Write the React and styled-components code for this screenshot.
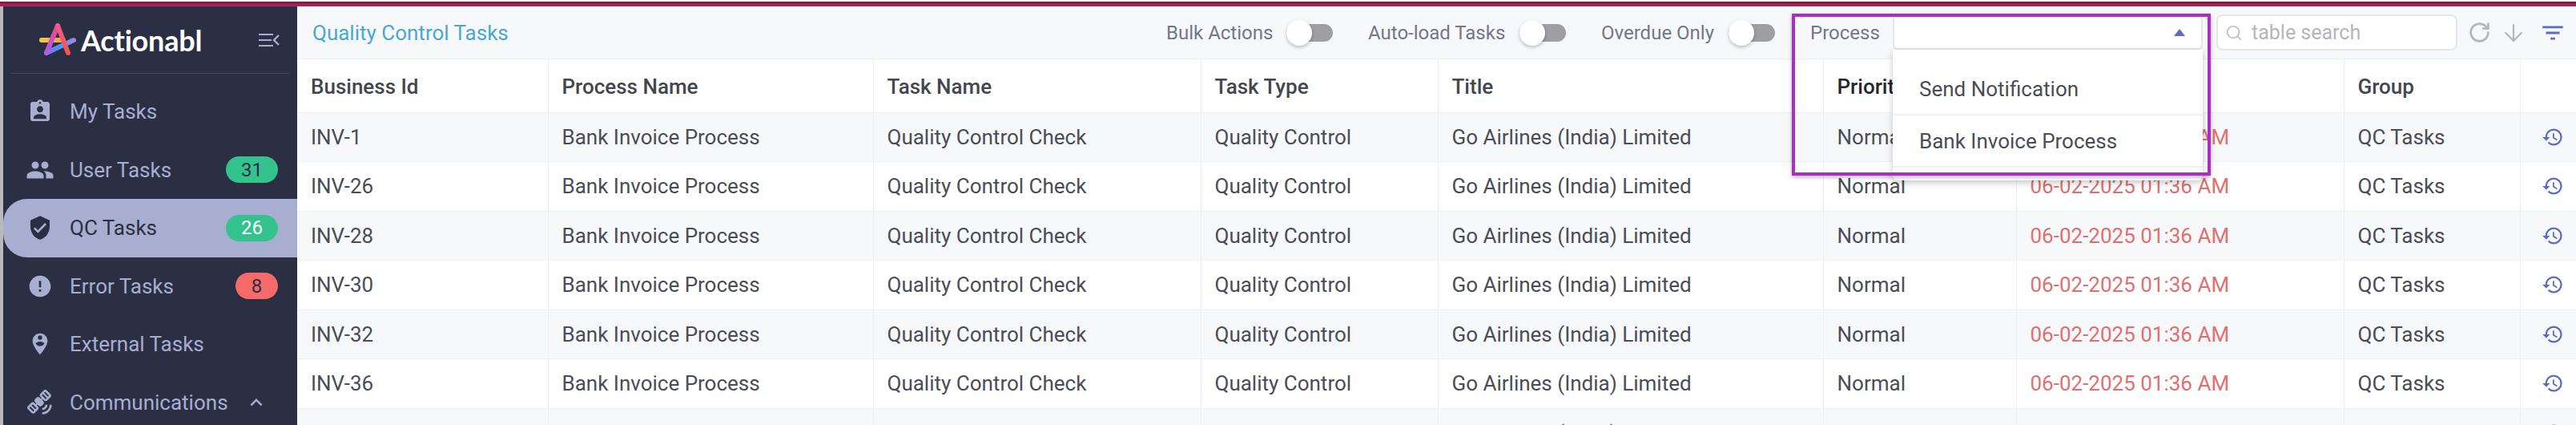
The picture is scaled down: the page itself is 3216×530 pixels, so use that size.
import React from 'react'
import styled, { createGlobalStyle } from 'styled-components'
import { MdAssignmentInd, MdPeople, MdVerifiedUser, MdError, MdPersonPinCircle, MdSatelliteAlt, MdHistory, MdKeyboardArrowUp, MdFilterList } from 'react-icons/md'
import { RotateCw, ArrowDown, Search } from 'lucide-react'

const GlobalStyle = createGlobalStyle`
    html, body {
        margin: 0;
        padding: 0;
        background: #fff;
        font-family: Roboto, "Liberation Sans", sans-serif;
    }
`

const columns = [
    { title: 'Business Id', width: 313 },
    { title: 'Process Name', width: 406 },
    { title: 'Task Name', width: 409 },
    { title: 'Task Type', width: 296 },
    { title: 'Title', width: 481 },
    { title: 'Priority', width: 241, dark: true },
    { title: '', width: 409 },
    { title: 'Group', width: 220 },
    { title: '', width: 70 },
]

const ids = ['INV-1', 'INV-26', 'INV-28', 'INV-30', 'INV-32', 'INV-36', 'INV-38']

const navItems = [
    { label: 'My Tasks', icon: MdAssignmentInd },
    { label: 'User Tasks', icon: MdPeople, badge: '31' },
    { label: 'QC Tasks', icon: MdVerifiedUser, badge: '26', active: true },
    { label: 'Error Tasks', icon: MdError, badge: '8', error: true },
    { label: 'External Tasks', icon: MdPersonPinCircle },
    { label: 'Communications', icon: MdSatelliteAlt, chevron: true },
]

function Logo() {
    return (
        <svg width="46" height="44" viewBox="0 0 46 44" fill="none" strokeLinecap="round" strokeWidth="6">
            <defs>
                <linearGradient id="logoYellow" gradientUnits="userSpaceOnUse" x1="3" y1="22" x2="30" y2="22">
                    <stop offset="0" stopColor="#f8c93e" />
                    <stop offset="1" stopColor="#f59a4c" />
                </linearGradient>
                <linearGradient id="logoLeft" gradientUnits="userSpaceOnUse" x1="23" y1="4" x2="9" y2="38">
                    <stop offset="0" stopColor="#f0487f" />
                    <stop offset="1" stopColor="#a860e8" />
                </linearGradient>
                <linearGradient id="logoRight" gradientUnits="userSpaceOnUse" x1="23" y1="4" x2="36" y2="38">
                    <stop offset="0" stopColor="#ee5b93" />
                    <stop offset="1" stopColor="#f0584c" />
                </linearGradient>
                <linearGradient id="logoBlue" gradientUnits="userSpaceOnUse" x1="9" y1="38" x2="43" y2="22">
                    <stop offset="0" stopColor="#8a6cf0" />
                    <stop offset="0.5" stopColor="#3f9bf2" />
                    <stop offset="1" stopColor="#a283e6" />
                </linearGradient>
            </defs>
            <path d="M3 22H30" stroke="url(#logoYellow)" />
            <path d="M9 38L43 22" stroke="url(#logoBlue)" />
            <path d="M23 4L9 38" stroke="url(#logoLeft)" />
            <path d="M23 4L36 38" stroke="url(#logoRight)" />
        </svg>
    )
}

function CollapseIcon() {
    return (
        <svg width="26" height="18" viewBox="0 0 26 18" fill="none" stroke="#a7aed0" strokeWidth="2">
            <path d="M0 2H18M0 9H16M0 16H18" />
            <path d="M25 3L19 9L25 15" strokeWidth="2.4" />
        </svg>
    )
}

export default function App() {
    return (
        <Page>
            <GlobalStyle />
            <TopStrip />
            <Body>
                <Edge />
                <Sidebar>
                    <Brand>
                        <Logo />
                        <BrandName>Actionabl</BrandName>
                        <Collapse><CollapseIcon /></Collapse>
                    </Brand>
                    <Nav>
                        {navItems.map((item) => (
                            <NavItem key={item.label} $active={item.active}>
                                <NavIcon><item.icon size={item.icon === MdPeople ? 36 : 32} /></NavIcon>
                                <NavLabel>{item.label}</NavLabel>
                                {item.badge && <Badge $error={item.error} $active={item.active}>{item.badge}</Badge>}
                                {item.chevron && <Chevron><MdKeyboardArrowUp size={30} /></Chevron>}
                            </NavItem>
                        ))}
                    </Nav>
                </Sidebar>
                <Main>
                    <Toolbar>
                        <Title>Quality Control Tasks</Title>
                        <ToggleGroup $width={132}>
                            <Label>Bulk Actions</Label>
                            <Toggle><Thumb /></Toggle>
                        </ToggleGroup>
                        <ToggleGroup $width={171}>
                            <Label>Auto-load Tasks</Label>
                            <Toggle><Thumb /></Toggle>
                        </ToggleGroup>
                        <ToggleGroup $width={141}>
                            <Label>Overdue Only</Label>
                            <Toggle><Thumb /></Toggle>
                        </ToggleGroup>
                        <ProcessLabel>Process</ProcessLabel>
                        <SelectBox>
                            <Caret />
                            <Dropdown>
                                <Option>Send Notification</Option>
                                <Option>Bank Invoice Process</Option>
                                <Option />
                            </Dropdown>
                        </SelectBox>
                        <SearchBox>
                            <Search size={22} color="#b9bcc4" strokeWidth={1.8} />
                            <SearchText>table search</SearchText>
                        </SearchBox>
                        <ToolIcons>
                            <RotateCw size={29} color="#b4b6bb" strokeWidth={2.2} />
                            <ArrowDown size={34} color="#b4b6bb" strokeWidth={1.6} />
                            <FilterIcon><MdFilterList size={34} /></FilterIcon>
                        </ToolIcons>
                    </Toolbar>
                    <Table>
                        <colgroup>
                            {columns.map((col, i) => <col key={i} style={{ width: col.width }} />)}
                        </colgroup>
                        <thead>
                            <tr>
                                {columns.map((col, i) => <Th key={i} $dark={col.dark}>{col.title}</Th>)}
                            </tr>
                        </thead>
                        <tbody>
                            {ids.map((id) => (
                                <Row key={id}>
                                    <Td>{id}</Td>
                                    <Td>Bank Invoice Process</Td>
                                    <Td>Quality Control Check</Td>
                                    <Td>Quality Control</Td>
                                    <Td>Go Airlines (India) Limited</Td>
                                    <Td>Normal</Td>
                                    <DateCell>06-02-2025 01:36 AM</DateCell>
                                    <Td>QC Tasks</Td>
                                    <IconCell><MdHistory size={28} /></IconCell>
                                </Row>
                            ))}
                        </tbody>
                    </Table>
                </Main>
            </Body>
            <Callout />
        </Page>
    )
}

const Page = styled.div`
    position: relative;
    width: 3216px;
    height: 530px;
    overflow: hidden;
    display: flex;
    flex-direction: column;
    background: #fff;
`

const TopStrip = styled.div`
    flex: none;
    height: 6px;
    margin-top: 2px;
    background: linear-gradient(#7c1040, #b22d62);
`

const Body = styled.div`
    flex: 1;
    display: flex;
    min-height: 0;
`

const Edge = styled.div`
    flex: none;
    width: 4px;
    background: #b9b9bb;
`

const Sidebar = styled.aside`
    flex: none;
    width: 367px;
    background: #2b2f44;
    display: flex;
    flex-direction: column;
`

const Brand = styled.div`
    flex: none;
    height: 83px;
    margin: 0 10px;
    padding: 0 12px 0 35px;
    border-bottom: 1px solid #45495f;
    display: flex;
    align-items: center;
`

const BrandName = styled.span`
    margin-left: 6px;
    font-family: Lato, sans-serif;
    font-weight: 700;
    font-size: 36px;
    color: #fff;
    letter-spacing: -0.2px;
`

const Collapse = styled.span`
    display: flex;
    margin-left: auto;
`

const Nav = styled.nav`
    padding-top: 11px;
    display: flex;
    flex-direction: column;
`

const NavItem = styled.div`
    flex: none;
    height: 72.5px;
    display: flex;
    align-items: center;
    padding: 0 24px 0 26px;
    color: ${(p) => (p.$active ? '#2b2f44' : '#a7aed0')};
    background: ${(p) => (p.$active ? '#a7aed0' : 'transparent')};
    border-radius: 30px 0 0 30px;
`

const NavIcon = styled.span`
    width: 40px;
    flex: none;
    display: flex;
    justify-content: center;
`

const NavLabel = styled.span`
    margin-left: 17px;
    font-size: 26px;
`

const Badge = styled.span`
    margin-left: auto;
    height: 33px;
    min-width: 53px;
    padding: 0 ${(p) => (p.$error ? 0 : 6)}px;
    box-sizing: ${(p) => (p.$error ? 'border-box' : 'content-box')};
    border-radius: 17px;
    display: flex;
    align-items: center;
    justify-content: center;
    font-size: 24px;
    color: ${(p) => (p.$active ? '#fff' : '#2b2f44')};
    background: ${(p) => (p.$error ? '#f66a6a' : '#34c28f')};
`

const Chevron = styled.span`
    display: flex;
    margin-left: auto;
    margin-right: 12px;
`

const Main = styled.main`
    flex: none;
    width: 2845px;
    display: flex;
    flex-direction: column;
`

const Toolbar = styled.div`
    flex: none;
    height: 66px;
    background: #f7f8fa;
    border-bottom: 1px solid #eceef1;
    box-sizing: border-box;
    display: flex;
    align-items: center;
    padding: 0 12px 0 19px;
`

const Title = styled.div`
    font-size: 26px;
    color: #4aa8cf;
    margin-right: auto;
`

const ToggleGroup = styled.div`
    display: flex;
    align-items: center;
    margin-right: 44px;
    & > span {
        width: ${(p) => p.$width}px;
        white-space: nowrap;
    }
`

const Label = styled.span`
    font-size: 24px;
    color: #74778a;
    margin-right: 18px;
`

const ProcessLabel = styled(Label)`
    width: 86px;
    margin-right: 17px;
`

const Toggle = styled.div`
    position: relative;
    width: 58px;
    height: 22px;
    border-radius: 11px;
    background: #9e9ea3;
`

const Thumb = styled.div`
    position: absolute;
    left: 0;
    top: -5px;
    width: 32px;
    height: 32px;
    border-radius: 50%;
    background: #fff;
    box-shadow: 0 2px 4px rgba(0, 0, 0, 0.25);
`

const SelectBox = styled.div`
    position: relative;
    width: 387px;
    height: 43px;
    box-sizing: border-box;
    background: #fff;
    border: 2px solid #e4e6ec;
    border-top-color: #f0f1f4;
    border-radius: 6px;
    margin-right: 17px;
`

const Caret = styled.div`
    position: absolute;
    right: 20px;
    top: 15px;
    width: 0;
    height: 0;
    border-left: 7px solid transparent;
    border-right: 7px solid transparent;
    border-bottom: 9px solid #5b6cc4;
`

const Dropdown = styled.div`
    position: absolute;
    left: -2px;
    top: 41px;
    width: 387px;
    height: 163px;
    overflow: hidden;
    background: #fff;
    border-radius: 0 0 6px 6px;
    box-shadow: 0 3px 8px rgba(0, 0, 0, 0.22);
    display: flex;
    flex-direction: column;
    padding-top: 17px;
    box-sizing: border-box;
    z-index: 5;
`

const Option = styled.div`
    flex: none;
    height: 65px;
    box-sizing: border-box;
    border-bottom: 2px solid #f0f1f4;
    display: flex;
    align-items: center;
    padding-left: 33px;
    font-size: 26px;
    color: #4a4d55;
`

const SearchBox = styled.div`
    width: 301px;
    height: 45px;
    box-sizing: border-box;
    background: #fff;
    border: 2px solid #e4e6ec;
    border-radius: 8px;
    display: flex;
    align-items: center;
    padding-left: 9px;
`

const SearchText = styled.span`
    margin-left: 11px;
    font-size: 25px;
    color: #b4b6bc;
`

const ToolIcons = styled.div`
    display: flex;
    align-items: center;
    margin-left: 13px;
    gap: 11px;
`

const FilterIcon = styled.span`
    display: flex;
    color: #5b6cc4;
    margin-left: 4px;
`

const Table = styled.table`
    width: 2845px;
    table-layout: fixed;
    border-collapse: collapse;
`

const Th = styled.th`
    height: 66px;
    box-sizing: border-box;
    padding: 3px 0 0 17px;
    text-align: left;
    font-size: 26px;
    font-weight: 500;
    color: ${(p) => (p.$dark ? '#24262b' : '#43464d')};
    background: #fff;
    border-right: 1px solid #eef0f3;
    border-bottom: 1px solid #eef0f3;
    white-space: nowrap;
    overflow: hidden;
`

const Row = styled.tr`
    height: 61.5px;
    &:nth-child(odd) {
        background: #f7f8fa;
    }
`

const Td = styled.td`
    padding: 0 0 0 17px;
    font-size: 26px;
    color: #4a4d55;
    border-right: 1px solid #eef0f3;
    border-bottom: 1px solid #eef0f3;
    white-space: nowrap;
`

const DateCell = styled(Td)`
    color: #e07070;
`

const IconCell = styled(Td)`
    padding: 0;
    color: #5b6cc4;
    text-align: center;
    border-right: none;
    & svg {
        display: block;
        margin-left: 26px;
    }
`

const Callout = styled.div`
    position: absolute;
    left: 2237px;
    top: 17px;
    width: 523px;
    height: 202px;
    box-sizing: border-box;
    border: 4px solid #a92fc4;
    box-shadow: 0 2px 5px rgba(0, 0, 0, 0.3);
    pointer-events: none;
    z-index: 10;
`
